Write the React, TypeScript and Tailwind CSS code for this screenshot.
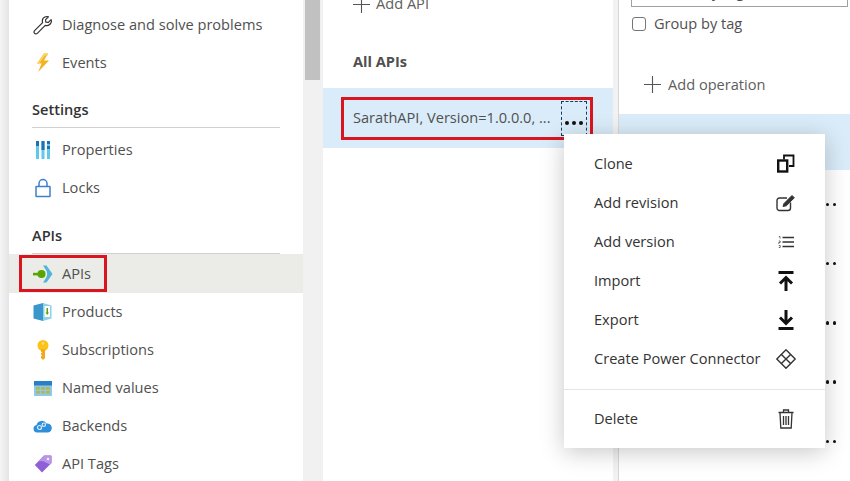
import type { ReactNode } from "react";

const FONT = "[font-family:'Open_Sans','Noto_Sans',sans-serif]";

const WrenchIcon = () => (
  <svg width="20" height="20" viewBox="0 0 20 20" fill="none" stroke="#333" strokeWidth="1.2" strokeLinejoin="round">
    <path d="M1.600 15.600 9.600 7.600C8.900 5 10 2.600 12.400 1.800c1.100-.4 2.200-.3 3 .1L12.600 4.700l.2 2.500 2.500.2 2.800-2.800c.4 1 .4 2.200-.1 3.200-1 2.200-3.400 3.200-5.800 2.500l-7.900 8c-.9.9-2.100.8-2.800 0-.6-.7-.7-1.800.1-2.700Z" />
  </svg>
);

const BoltIcon = () => (
  <svg width="14" height="20" viewBox="0 0 14 20">
    <path d="M8 0.500 1 10.500h4.500L2.200 19 13 7.500H8L12 .5Z" fill="#f5b324" />
    <path d="M8 .5 1 10.500h2L9 2.500h2.800l.2-2Z" fill="#fcd462" />
  </svg>
);

const PropertiesIcon = () => (
  <svg width="16" height="20" viewBox="0 0 16 20">
    <rect x="1" y="1" width="3" height="18" fill="#5fc8ec" />
    <rect x="6.500" y="1" width="3" height="18" fill="#5fc8ec" />
    <rect x="12" y="1" width="3" height="18" fill="#5fc8ec" />
    <rect x="1" y="1" width="3" height="5" fill="#1f6fb5" />
    <rect x="6.500" y="1" width="3" height="9" fill="#1f6fb5" />
    <rect x="12" y="1" width="3" height="3" fill="#1f6fb5" />
    <rect x="12" y="6" width="3" height="3" fill="#1f6fb5" />
  </svg>
);

const LockIcon = () => (
  <svg width="16" height="20" viewBox="0 0 16 20" fill="none" stroke="#3f7fcb" strokeWidth="1.500">
    <rect x="1" y="8.500" width="14" height="10" rx="0.500" />
    <path d="M4 8.500V5.500a4 4 0 0 1 8 0v3" />
  </svg>
);

const ApiIcon = () => (
  <svg width="20" height="18" viewBox="0 0 20 18">
    <path d="M10 0.500h3.500L19.500 9l-6 8.500H10L13 13c1.600-2.400 1.600-5.600 0-8Z" fill="#50b5d8" />
    <rect x="0" y="7.800" width="8" height="2.600" fill="#5ba300" />
    <circle cx="8.500" cy="9" r="4" fill="#5ba300" />
  </svg>
);

const ProductsIcon = () => (
  <svg width="19" height="18" viewBox="0 0 19 18">
    <path d="M0.500 2.500 10 0v18l-9.500-2.500Z" fill="#3a97cc" />
    <path d="M10 0 18.500 2.500v13L10 18Z" fill="#8ed2e8" />
    <rect x="11.500" y="3" width="5.500" height="11" fill="#fff" />
    <rect x="13.500" y="5" width="1.500" height="5" fill="#5ba300" />
    <path d="M12.500 9.500h3.500L14.250 12Z" fill="#5ba300" />
  </svg>
);

const KeyIcon = () => (
  <svg width="14" height="20" viewBox="0 0 14 20">
    <circle cx="7" cy="5.500" r="5.500" fill="#fcc419" />
    <path d="M5 9h4v9l-2 2-2-2v-1.500l1-1-1-1v-1l1-1-1-1Z" fill="#f5a81c" />
    <circle cx="7" cy="3.500" r="1.200" fill="#fde58a" />
  </svg>
);

const ValuesIcon = () => (
  <svg width="18" height="15" viewBox="0 0 18 15">
    <rect width="18" height="15" fill="#8ec9ea" />
    <rect width="18" height="4.500" fill="#2a7fc9" />
    <g fill="#b4b84a">
      <rect x="2" y="6" width="4" height="2.500" />
      <rect x="7" y="6" width="4" height="2.500" />
      <rect x="12" y="6" width="4" height="2.500" />
      <rect x="2" y="10" width="4" height="2.500" />
      <rect x="7" y="10" width="4" height="2.500" />
      <rect x="12" y="10" width="4" height="2.500" />
    </g>
  </svg>
);

const CloudIcon = () => (
  <svg width="19" height="14" viewBox="0 0 19 14">
    <path d="M4 13.500A3.800 3.800 0 0 1 3.500 6 5.500 5.500 0 0 1 13.500 4.500 4.500 4.500 0 0 1 15 13.500Z" fill="#2f8fdb" />
    <circle cx="6.500" cy="8.500" r="2" fill="none" stroke="#d4ecfa" strokeWidth="1.200" />
    <circle cx="10.800" cy="5.700" r="1.700" fill="none" stroke="#d4ecfa" strokeWidth="1.200" />
  </svg>
);

const TagIcon = () => (
  <svg width="18" height="18" viewBox="0 0 18 18">
    <path d="M10 .5h6.500c.6 0 1 .4 1 1V8L8 17.500.8 10Z" fill="#8e5fd6" />
    <path d="M4.500 6.500 10 .5h6.500c.6 0 1 .4 1 1V8l-1.500 1.500L8.500 6Z" fill="#b796e8" />
    <circle cx="14" cy="4" r="1.300" fill="#f2eafc" />
  </svg>
);

const CloneIcon = () => (
  <svg width="18" height="19" viewBox="0 0 18 19" fill="none" stroke="#111" strokeWidth="1.800">
    <rect x="1.200" y="6.500" width="9" height="11" strokeWidth="2.400" />
    <path d="M7 5.500V1.500h9.500V12H12" />
  </svg>
);

const EditIcon = () => (
  <svg width="20" height="18" viewBox="0 0 20 18" fill="none" stroke="#333" strokeWidth="1.400">
    <path d="M14.500 8.500V14a2.500 2.500 0 0 1-2.500 2.500H3.500A2.500 2.500 0 0 1 1 14V6.500A2.500 2.500 0 0 1 3.500 4H11" />
    <path d="M7 12.500 8 9.500 16 1.500l2.300 2.300-8 8Z" fill="#333" stroke="#333" strokeWidth="1" />
  </svg>
);

const ListIcon = () => (
  <svg width="16" height="12" viewBox="0 0 16 12" fill="none" stroke="#333">
    <path d="M4.500 1.500H16M4.500 6H16M4.500 10.500H16" strokeWidth="1.300" />
    <path d="M.8 .5h1.200v2M.8 5h1.400v1.500H.8V8M.8 9.500h1.400v2H.8" strokeWidth=".7" />
  </svg>
);

const ImportIcon = () => (
  <svg width="16" height="20" viewBox="0 0 16 20" fill="none" stroke="#111">
    <path d="M.5 1.500h15" strokeWidth="3" />
    <path d="M8 20V7M2 12.500 8 6.500l6 6" strokeWidth="3" />
  </svg>
);

const ExportIcon = () => (
  <svg width="16" height="20" viewBox="0 0 16 20" fill="none" stroke="#111">
    <path d="M.5 18.500h15" strokeWidth="3" />
    <path d="M8 0v13M2 7.500l6 6 6-6" strokeWidth="3" />
  </svg>
);

const ConnectorIcon = () => (
  <svg width="20" height="20" viewBox="0 0 20 20" fill="none" stroke="#333" strokeWidth="1.400" strokeLinejoin="round">
    <path d="M10 .8 19.200 10 10 19.200 .8 10Z" />
    <path d="M5.400 5.400 14.600 14.600M14.600 5.400 5.400 14.600" />
  </svg>
);

const TrashIcon = () => (
  <svg width="16" height="20" viewBox="0 0 16 20" fill="none" stroke="#333" strokeWidth="1.300">
    <path d="M.5 3.500h15M5.500 3.500V1h5v2.500M2 3.500l.8 15.500h10.400L14 3.500" />
    <path d="M5.500 7v9M8 7v9M10.500 7v9" />
  </svg>
);

const PlusIcon = () => (
  <svg width="17" height="17" viewBox="0 0 17 17" className="shrink-0" stroke="#555" strokeWidth="1.100">
    <path d="M8.500 0v17M0 8.500h17" />
  </svg>
);

function NavRow({ icon, label, active }: { icon: ReactNode; label: string; active?: boolean }) {
  return (
    <div className={`flex items-center ${active ? "h-[39px] bg-[#ebebe8]" : "h-[38px]"}`}>
      <div className="ml-[23px] flex w-[30px] justify-center pr-[9px]">{icon}</div>
      <span className="text-[14.6px] text-[#505050]">{label}</span>
    </div>
  );
}

function NavHeading({ label }: { label: string }) {
  return (
    <div className="mx-[23px] flex h-[30px] items-center border-b border-[#d0d0d0] pb-[6px] text-[14.6px] font-semibold text-[#333]">
      {label}
    </div>
  );
}

function MenuRow({ icon, label }: { icon: ReactNode; label: string }) {
  return (
    <div className="flex h-[39px] items-center pl-[30px]">
      <span className="min-w-0 flex-1 whitespace-nowrap text-[14.6px] text-[#333]">{label}</span>
      <div className="flex w-[78px] shrink-0 justify-center">{icon}</div>
    </div>
  );
}

const Dots = () => (
  <div className="flex gap-[3.500px]">
    <span className="h-[3.500px] w-[3.500px] rounded-full bg-[#111]" />
    <span className="h-[3.500px] w-[3.500px] rounded-full bg-[#111]" />
    <span className="h-[3.500px] w-[3.500px] rounded-full bg-[#111]" />
  </div>
);

export default function App() {
  return (
    <div className={`relative flex h-[481px] w-[850px] overflow-hidden bg-white ${FONT}`}>
      <div className="w-[9px] bg-gradient-to-r from-[#f5f5f5] to-[#e4e4e4]" />

      {/* resource menu */}
      <div className="w-[294px] bg-white pt-[6px]">
        <NavRow icon={<WrenchIcon />} label="Diagnose and solve problems" />
        <NavRow icon={<BoltIcon />} label="Events" />
        <div className="mt-[16px]">
          <NavHeading label="Settings" />
        </div>
        <div className="mt-[3px]">
          <NavRow icon={<PropertiesIcon />} label="Properties" />
          <NavRow icon={<LockIcon />} label="Locks" />
        </div>
        <div className="mt-[17px]">
          <NavHeading label="APIs" />
        </div>
        <NavRow icon={<ApiIcon />} label="APIs" active />
        <NavRow icon={<ProductsIcon />} label="Products" />
        <NavRow icon={<KeyIcon />} label="Subscriptions" />
        <NavRow icon={<ValuesIcon />} label="Named values" />
        <NavRow icon={<CloudIcon />} label="Backends" />
        <NavRow icon={<TagIcon />} label="API Tags" />
      </div>

      {/* scrollbar */}
      <div className="w-[20px] bg-[#f1f1f1] pl-[2px] pr-[3px]">
        <div className="h-[80px] bg-[#c1c1c1]" />
      </div>

      {/* api list */}
      <div className="w-[290px] bg-white">
        <div className="flex h-[8px] items-center gap-[6px] pl-[30px] text-[14.6px] text-[#605e5c]">
          <PlusIcon />
          <span>Add API</span>
        </div>
        <div className="flex h-[80px] items-center pl-[30px] pt-[28px] text-[14.6px] font-bold text-[#505050]">All APIs</div>
        <div className="flex h-[60px] items-center bg-[#daecf9] pl-[30px] pr-[26px]">
          <span className="flex-1 whitespace-nowrap text-[14.6px] text-[#505050]">SarathAPI, Version=1.0.0.0, ...</span>
          <div className="flex h-[35px] w-[26px] items-end justify-center border border-dashed border-[#1c3a5a] pb-[10px]">
            <Dots />
          </div>
        </div>
      </div>

      <div className="w-[6px] border-r border-[#d8d8d8] bg-[#f2f2f2]" />

      {/* operations */}
      <div className="flex-1 bg-white">
        <div className="ml-[12px] mr-[2px] h-[7px] overflow-hidden border-x border-b border-[#a0a0a0]">
          <div className="-mt-[19px] pl-[21px] text-[14.6px] text-[#505050]">Search by tag</div>
        </div>
        <div className="ml-[13px] mt-[6px] flex items-center gap-[8px]">
          <div className="h-[14px] w-[14px] rounded-[3px] border border-[#767676] bg-white" />
          <span className="text-[14.6px] text-[#505050]">Group by tag</span>
        </div>
        <div className="mt-[39px] flex items-center gap-[7px] pl-[25px] text-[14.6px] text-[#605e5c]">
          <PlusIcon />
          <span>Add operation</span>
        </div>
        <div className="mt-[18px] h-[56px] bg-[#daecf9]" />
        <div className="pt-[5px]">
          {[0, 1, 2, 3, 4].map((i) => (
            <div key={i} className="flex h-[59.250px] items-center justify-end pr-[14px]">
              <Dots />
            </div>
          ))}
        </div>
      </div>

      {/* callout outlines */}
      <div className="absolute left-[19px] top-[255px] h-[37px] w-[88px] border-[3px] border-[#d9161f]" />
      <div className="absolute left-[341px] top-[97px] h-[43px] w-[252px] border-[3px] border-[#d9161f]" />

      {/* context menu */}
      <div className="absolute left-[564px] top-[134px] w-[261px] bg-white py-[10px] shadow-[0_4px_22px_rgba(0,0,0,0.22)]">
        <MenuRow icon={<CloneIcon />} label="Clone" />
        <MenuRow icon={<EditIcon />} label="Add revision" />
        <MenuRow icon={<ListIcon />} label="Add version" />
        <MenuRow icon={<ImportIcon />} label="Import" />
        <MenuRow icon={<ExportIcon />} label="Export" />
        <MenuRow icon={<ConnectorIcon />} label="Create Power Connector" />
        <div className="mt-[11px] border-t border-[#e4e4e4] pt-[9px]">
          <MenuRow icon={<TrashIcon />} label="Delete" />
        </div>
      </div>
    </div>
  );
}
